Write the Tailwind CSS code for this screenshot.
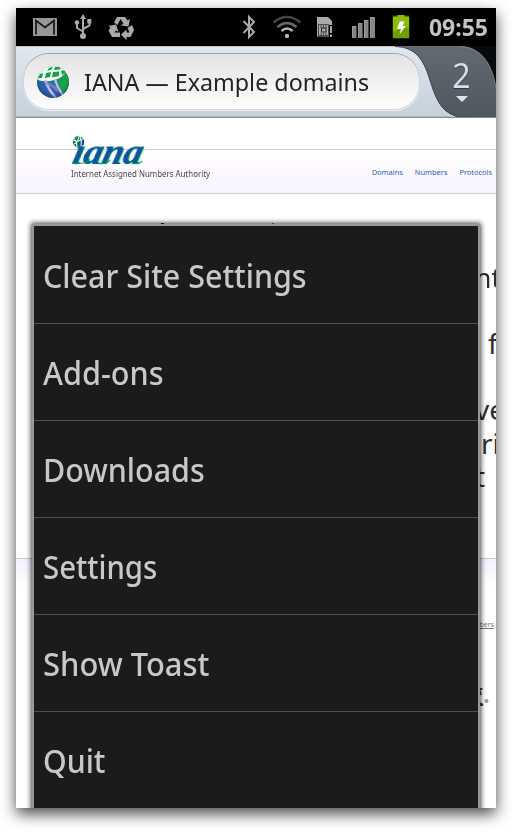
<!DOCTYPE html>
<html lang="en">
<head>
<meta charset="utf-8">
<title>IANA — Example domains</title>
<script src="https://cdn.jsdelivr.net/npm/@tailwindcss/browser@4"></script>
</head>
<body class="h-[832px] w-[512px] overflow-hidden bg-white px-4 py-2 font-['Noto_Sans',sans-serif]">
<main class="relative h-[800px] w-[480px] shadow-[0_6px_14px_0_rgba(0,0,0,0.7)]">
 <div class="relative flex h-full w-full flex-col overflow-hidden bg-white">
  <header class="h-[38px] shrink-0 bg-black">
   <div class="flex h-full items-center">
    <svg class="h-[38px] w-[410px] shrink-0" viewBox="16 8 410 38" fill="none">
     <rect x="33" y="18" width="24" height="18" fill="#979797"/>
     <path d="M36 34.500V20.500L45 27.500L54 20.500V34.500" stroke="#161616" stroke-width="1.700"/>
     <g stroke="#aaa" stroke-width="2"><path d="M83 36V17M83 31.500L77 28V22.500M83 29L89.500 25.500V21"/></g>
     <g fill="#aaa"><path d="M83 14L86 19H80Z"/><circle cx="83" cy="36" r="3"/><circle cx="77" cy="22.500" r="2.300"/><rect x="87.300" y="19" width="4" height="4.500"/></g>
     <g fill="#aaa">
      <path d="M114 22.500L117 17H125L127.500 20.500L130 19L128.500 26.500L121 25.500L123.500 23.500L120.500 19L117.500 25Z"/>
      <path d="M127.500 28L132 25L134 30L130.500 37H126.500V40L121 34.500L126.500 29.500V32.500H129.500Z"/>
      <path d="M120 37H112L108.500 30.500L110.500 27.500L108.500 26L116 24.500L118.500 32L116 30.500L114.500 32.500H120Z"/>
     </g>
     <path d="M243.500 21L254 32L249 37V17L254 22L243.500 33" stroke="#aaa" stroke-width="2"/>
     <path d="M273.500 22.500Q287 11.500 300.500 22.500" stroke="#454545" stroke-width="2.500"/>
     <path d="M277.500 27Q287 19 296.500 27" stroke="#686868" stroke-width="2.500"/>
     <path d="M281.500 31Q287 26 292.500 31" stroke="#b4b4b4" stroke-width="2.500"/>
     <circle cx="287" cy="36" r="2.200" fill="#b4b4b4"/>
     <path d="M317 17H328L332 21V25H329V36.500H317Z" fill="#aaa"/>
     <path d="M318.500 24.500H328.500V35.500H318.500ZM321 25V28M323.500 25V28M326 25V28M321 33V36M323.500 33V36M326 33V36" stroke="#333" stroke-width=".8"/>
     <rect x="321.500" y="28" width="4.500" height="4" fill="#aaa" stroke="#222"/>
     <path d="M331 26V33M331 34.500V37" stroke="#aaa" stroke-width="2"/>
     <g fill="#868686"><path d="M352 26H356.500V38H352ZM358 23H362.500V38H358ZM364 20H368.500V38H364ZM370 17H375V38H370Z"/></g>
     <path d="M352.500 37.500V26.500H356M358.500 37.500V23.500H362M364.500 37.500V20.500H368M370.500 37.500V17.500H374.500" stroke="#999" stroke-width="1"/>
     <rect x="392" y="15" width="18" height="24" rx="2" fill="#5f9000" opacity=".3"/>
     <path d="M393 16.500H397.500V15H404.500V16.500H409V38H393Z" fill="#8abd08"/>
     <path d="M401 28H409V38H393V32Z" fill="#70a000"/>
     <path d="M399.500 21.500H404.500L402.500 26H405.500L399.500 34.500L401 29H397Z" fill="#fff"/>
    </svg>
    <span class="ml-[3px] inline-block origin-left scale-x-[0.955] text-[24px] leading-[38px] font-bold text-[#c3c3c3]">09:55</span>
   </div>
  </header>
  <section class="relative h-[72px] shrink-0 bg-linear-to-b from-[#e2e8ee] to-[#c5d0dc]">
   <svg class="absolute inset-0 h-[72px] w-[480px]" viewBox="16 46 480 72">
    <defs><linearGradient id="tab" x1="0" y1="0" x2="0" y2="1"><stop stop-color="#646a72"/><stop offset="1" stop-color="#50565e"/></linearGradient></defs>
    <path d="M395 46C417 47 424 62 429 77C436 100 442 118 468 118H496V46Z" fill="#08090b"/>
    <path d="M395 46C417 47 424 62 429 77C436 100 442 118 468 118H496V88C493 70 485 47 460 46Z" fill="url(#tab)"/>
    <path d="M395 46.500C417 47 424 62 429 77C436 100 442 117.500 468 117.500" fill="none" stroke="#434a53" stroke-width="1"/>
    <path d="M460 46.500C485 47 493 70 496 88" fill="none" stroke="#7b8189" stroke-width="1"/>
    <path d="M16 46.500H395" stroke="#c1c6ce"/>
    <path d="M16 117.500H496" stroke="#858b94"/>
    <path d="M16 116.500H450" stroke="#aeb7c2"/>
    <path d="M456 96H468L462 102Z" fill="#dce5ee"/>
   </svg>
   <div class="relative flex h-full items-start justify-between pt-[8px] pl-[8px]">
    <div class="flex h-[55px] w-[395px] items-center rounded-[25px] bg-linear-to-b from-[#e3e3e3] to-[#fefefe] pl-[13px] shadow-[0_-1px_0_#a0a5ad,0_0_0_1px_#cdd3da,0_1px_0_1px_#f2f5f8]">
     <svg class="h-8 w-8 shrink-0" viewBox="0 0 32 32">
      <defs><linearGradient id="g" x1=".7" y1="0" x2=".3" y2="1"><stop offset=".3" stop-color="#16a04c"/><stop offset=".5" stop-color="#1b7d8c"/><stop offset=".65" stop-color="#2a5fae"/></linearGradient><radialGradient id="s" cx=".5" cy=".42" r=".55"><stop offset=".8" stop-color="#000" stop-opacity="0"/><stop offset="1" stop-color="#103050" stop-opacity=".35"/></radialGradient><clipPath id="c"><circle cx="16" cy="16" r="16"/></clipPath><filter id="soft"><feGaussianBlur stdDeviation=".6"/></filter></defs>
      <g clip-path="url(#c)"><rect width="32" height="32" fill="url(#g)"/>
      <g filter="url(#soft)"><path d="M-2 13V-2H27L29 5Q26 12 17 14Q8 17 -2 13Z" fill="#f2faf5"/>
      <path d="M12 2L16 0.500L14.500 3.500L10 5ZM18 1L24 1L23 3.500L17 4ZM9 7L14 6L13 11L8 12ZM16 6L22 5.500L22 10L15 11.500ZM24 5L28 4L29 6L25 9ZM3 8L6 7L5 12L1 12Z" fill="#16a24b"/>
      <path d="M22 16L31 9L33 20L27 27Q22 23 22 16Z" fill="#12a346"/>
      <path d="M8 14Q11 23 19 32M18 13Q20 21 26 29" fill="none" stroke="#c2b9e4" stroke-width="2.500"/>
      <path d="M8 17Q15 18 21 25" fill="none" stroke="#9485cc" stroke-width="3" opacity=".7"/></g><rect width="32" height="32" fill="url(#s)"/></g>
     </svg>
     <span class="ml-[15px] inline-block origin-left scale-x-[0.97] text-[24px] whitespace-nowrap text-[#242424]">IANA — Example domains</span>
    </div>
    <span class="mt-[1px] mr-[26px] inline-block origin-right scale-x-[0.94] text-[34px] leading-[40px] text-[#d4dfe9] [text-shadow:0_1px_1px_#30363e]">2</span>
   </div>
  </section>
  <article class="flex min-h-0 grow flex-col">
   <div class="h-[31px] shrink-0"></div>
   <div class="flex h-[45px] shrink-0 justify-between border-y border-[#d0d1d6] bg-linear-to-b from-white via-[#fdf9fd] to-[#f3f6ff]">
    <div class="-mt-[17px] ml-[55px] flex flex-col">
     <svg class="h-[34px] w-[80px] shrink-0 overflow-visible" viewBox="71 132 80 34">
      <g transform="translate(72 163) skewX(-14)" class="[filter:drop-shadow(1.5px_0.7px_0_#00a454)]" font-family="Liberation Serif, serif" font-size="36" font-weight="bold" font-style="italic">
       <text x="-1" y="0" textLength="69" lengthAdjust="spacingAndGlyphs" fill="#0c559f">ıana</text>
      </g>
      <path d="M72 162.500Q86 163.500 90 158.500M98 162.500Q107 163.500 110 159M132 162.500Q140 163.500 142 160" fill="none" stroke="#00a454" stroke-width="1.200"/>
      <circle cx="78.500" cy="140.700" r="5.700" fill="#14804f"/><path d="M79 141L84 139V143Q82 146 79 146Z" fill="#0c4d98"/>
      <path d="M73 139Q78 142 84 137M74 143Q78 142 79 135M77 146Q77 140 74 137M81 145Q82 140 80 135" fill="none" stroke="#fff" stroke-width="1"/>
     </svg>
     <span class="inline-block origin-left scale-x-[0.985] text-[8px] leading-[14px] whitespace-nowrap text-[#4b454b]">Internet Assigned Numbers Authority</span>
    </div>
    <nav class="mr-[4px] flex gap-[12px] pt-[16px] text-[7.500px] leading-[12px] tracking-[-0.04px] text-[#2a62bd]"><span>Domains</span><span>Numbers</span><span>Protocols</span></nav>
   </div>
   <div class="flex h-[364px] shrink-0 flex-col pt-[67px] text-[28px] leading-[32px] whitespace-nowrap text-[#2d2d2d]">
    <p class="h-[66px] pl-[459px]"><span class="inline-block origin-left scale-x-[0.95]">nt</span></p>
    <p class="h-[66px] pl-[472px]">f</p>
    <p class="h-[34px] pl-[459px]">ve</p>
    <p class="h-[33px] pl-[465px]">ri</p>
    <p class="h-[33px] pl-[459px]">t</p>
   </div>
   <div class="grow border-t border-[#c9cad2]">
    <div class="h-[30px] bg-linear-to-b from-[#f0f3ff] via-[#fbf8fd] to-white"></div>
    <p class="mt-[30px] pr-[2px] text-right text-[7px] leading-[12px] text-[#777] underline">Numbers</p>
    <div class="mt-[55px] flex items-center justify-end pr-[6px]">
     <svg class="h-[24px] w-[18px]" viewBox="472 686 18 24"><path d="M482.500 689H479L481 695M479 703L483 705H478" stroke="#444" stroke-width="2" fill="none"/><circle cx="486.500" cy="701" r="2" fill="#999"/></svg>
    </div>
   </div>
  </article>
  <ul class="absolute top-[216px] left-[16px] h-[600px] w-[448px] border-2 border-[#999] bg-[#1b1b1b] text-[32px] font-medium text-[#c8c8c8] shadow-[0_0_5px_1px_rgba(0,0,0,0.75)]">
   <li class="flex h-[98px] items-center border-b border-[#4e4e4e] pt-[2px] pl-[9px]"><span class="inline-block origin-left scale-x-[0.951] whitespace-nowrap">Clear Site Settings</span></li>
   <li class="flex h-[97px] items-center border-b border-[#4e4e4e] pt-[2px] pl-[9px]"><span class="inline-block origin-left scale-x-[0.956] whitespace-nowrap">Add-ons</span></li>
   <li class="flex h-[97px] items-center border-b border-[#4e4e4e] pt-[2px] pl-[9px]"><span class="inline-block origin-left scale-x-[0.951] whitespace-nowrap">Downloads</span></li>
   <li class="flex h-[97px] items-center border-b border-[#4e4e4e] pt-[2px] pl-[9px]"><span class="inline-block origin-left scale-x-[0.918] whitespace-nowrap">Settings</span></li>
   <li class="flex h-[97px] items-center border-b border-[#4e4e4e] pt-[2px] pl-[9px]"><span class="inline-block origin-left scale-x-[0.967] whitespace-nowrap">Show Toast</span></li>
   <li class="flex h-[97px] items-center pt-[1px] pl-[9px]"><span class="inline-block origin-left scale-x-[0.945] whitespace-nowrap">Quit</span></li>
  </ul>
  <div class="absolute top-[215px] left-[145px] h-px w-[3px] bg-black"></div>
  <div class="absolute top-[215px] left-[256px] h-px w-[2px] bg-[#444]"></div>
 </div>
</main>
</body>
</html>
